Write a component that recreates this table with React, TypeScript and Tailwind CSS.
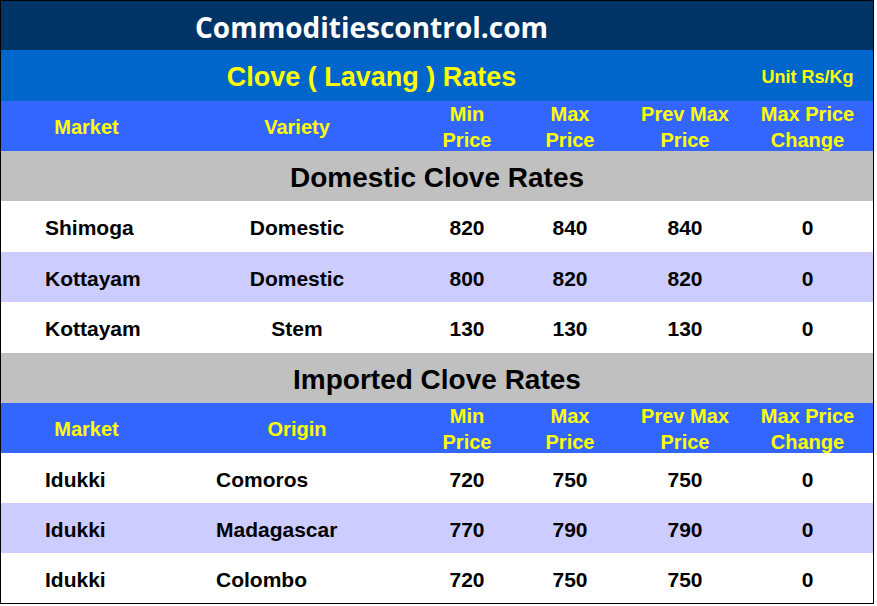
type Row = { market: string; variety: string; min: number; max: number; prev: number; change: number; alt?: boolean }

const domestic: Row[] = [
  { market: 'Shimoga', variety: 'Domestic', min: 820, max: 840, prev: 840, change: 0 },
  { market: 'Kottayam', variety: 'Domestic', min: 800, max: 820, prev: 820, change: 0, alt: true },
  { market: 'Kottayam', variety: 'Stem', min: 130, max: 130, prev: 130, change: 0 },
]

const imported: Row[] = [
  { market: 'Idukki', variety: 'Comoros', min: 720, max: 750, prev: 750, change: 0 },
  { market: 'Idukki', variety: 'Madagascar', min: 770, max: 790, prev: 790, change: 0, alt: true },
  { market: 'Idukki', variety: 'Colombo', min: 720, max: 750, prev: 750, change: 0 },
]

const cols = 'grid grid-cols-[171px_250px_90px_116px_114px_131px]'

function HeaderRow({ second, h }: { second: string; h: string }) {
  return (
    <div className={`${cols} ${h} bg-[#3366ff] text-[#ffff00] text-[20px] font-bold leading-[26px] text-center items-center`}>
      <div>Market</div>
      <div>{second}</div>
      <div>Min<br />Price</div>
      <div>Max<br />Price</div>
      <div>Prev Max<br />Price</div>
      <div>Max Price<br />Change</div>
    </div>
  )
}

function DataRow({ r, h, leftVariety }: { r: Row; h: string; leftVariety?: boolean }) {
  return (
    <div className={`${cols} ${h} ${r.alt ? 'bg-[#ccccff]' : 'bg-white'} text-black text-[21px] font-bold items-center pt-[3px]`}>
      <div className="pl-[44px]">{r.market}</div>
      <div className={leftVariety ? 'pl-[44px]' : 'text-center'}>{r.variety}</div>
      <div className="text-center">{r.min}</div>
      <div className="text-center">{r.max}</div>
      <div className="text-center">{r.prev}</div>
      <div className="text-center">{r.change}</div>
    </div>
  )
}

export default function App() {
  return (
    <div className="w-[877px] h-[606px] bg-white" style={{ fontFamily: '"Liberation Sans", Arial, sans-serif' }}>
      <div className="w-[874px] border border-black flex flex-col">
        <div className="h-[49px] bg-[#003366] grid grid-cols-[741px_131px] items-center pt-[3px]">
          <div className="text-center text-white text-[28px] font-bold" style={{ fontFamily: '"Open Sans", "Noto Sans", sans-serif' }}>Commoditiescontrol.com</div>
          <div />
        </div>
        <div className="h-[51px] bg-[#0066cc] grid grid-cols-[741px_131px] items-center text-[#ffff00] font-bold pt-[3px]">
          <div className="text-center text-[27px]">Clove ( Lavang ) Rates</div>
          <div className="text-center text-[18px]">Unit Rs/Kg</div>
        </div>
        <HeaderRow second="Variety" h="h-[50px]" />
        <div className="h-[50px] bg-[#c0c0c0] flex items-center justify-center text-[28px] font-bold text-black pt-[3px]">Domestic Clove Rates</div>
        <DataRow r={domestic[0]} h="h-[51px]" />
        <DataRow r={domestic[1]} h="h-[50px]" />
        <DataRow r={domestic[2]} h="h-[51px]" />
        <div className="h-[50px] bg-[#c0c0c0] flex items-center justify-center text-[28px] font-bold text-black pt-[3px]">Imported Clove Rates</div>
        <HeaderRow second="Origin" h="h-[50px]" />
        {imported.map((r, i) => (
          <DataRow key={i} r={r} h="h-[50px]" leftVariety />
        ))}
      </div>
    </div>
  )
}
